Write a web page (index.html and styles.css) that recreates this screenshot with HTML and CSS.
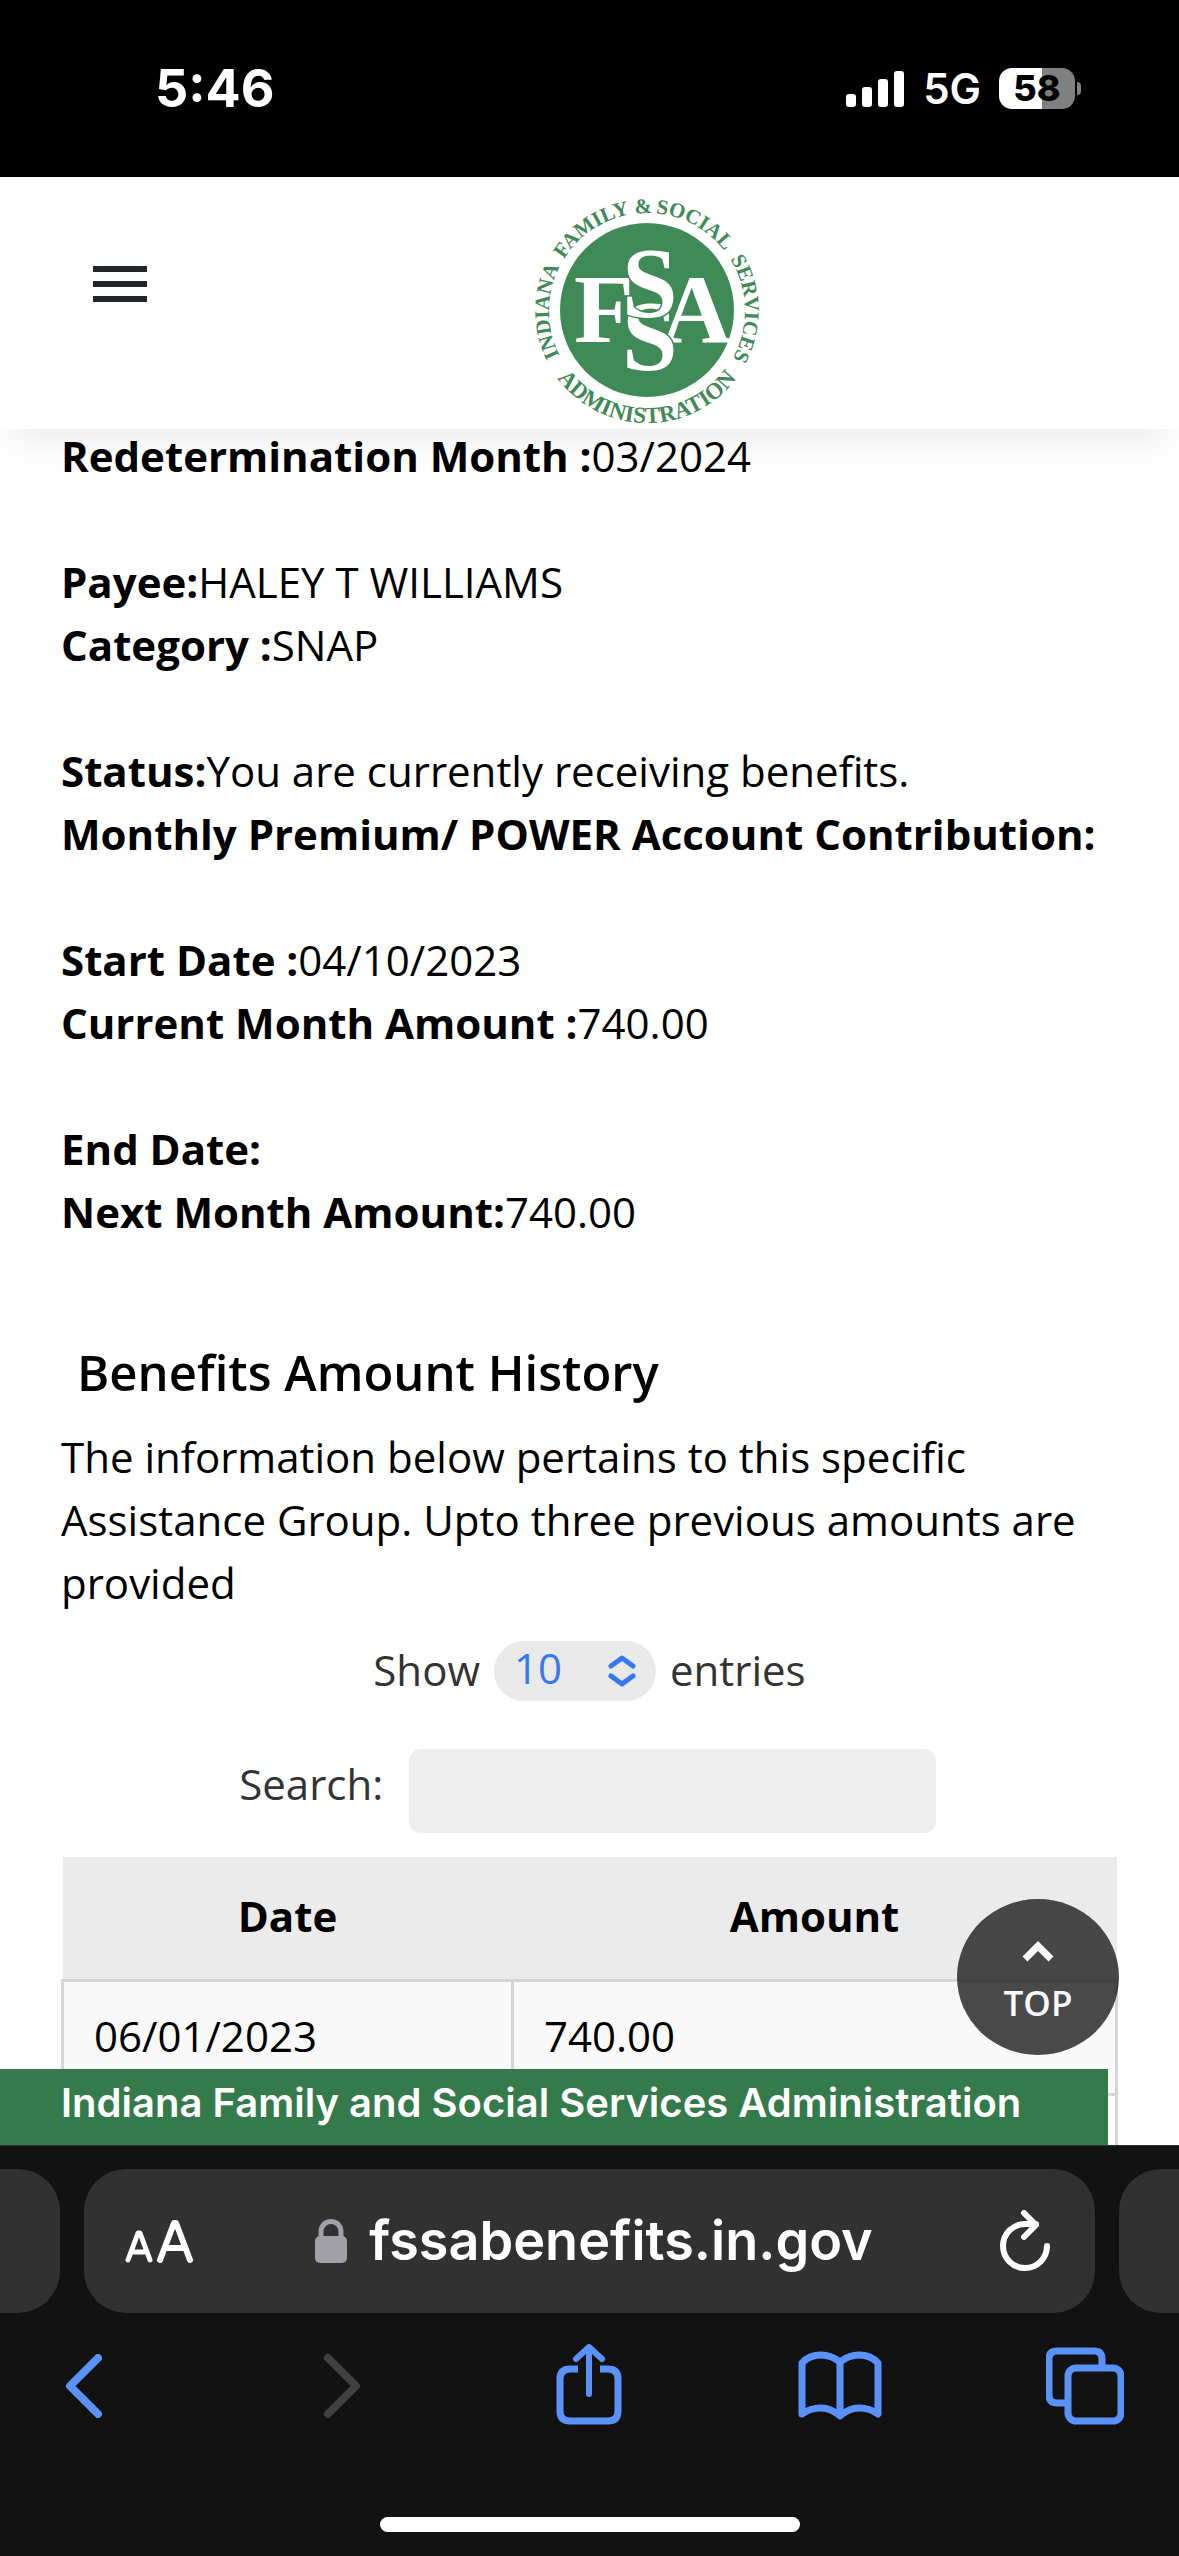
FILE: index.html
```html
<!DOCTYPE html>
<html lang="en">
<head>
<meta charset="utf-8">
<meta name="viewport" content="width=device-width, initial-scale=1">
<title>Indiana FSSA Benefits</title>
<link rel="stylesheet" href="styles.css">
</head>
<body>
<div class="phone">
  <div class="status">
    <span class="time">5:46</span>
    <div class="indicators">
      <svg class="signal" viewBox="0 0 60 38" aria-label="Signal">
        <rect x="1" y="24" width="10" height="13" rx="3"/><rect x="17" y="17" width="10" height="20" rx="3"/><rect x="33" y="9" width="10" height="28" rx="3"/><rect x="49" y="1" width="10" height="36" rx="3"/>
      </svg>
      <span class="network">5G</span>
      <div class="battery"><span class="battery-level">58</span><span class="battery-nub"></span></div>
    </div>
  </div>

  <header class="site-header">
    <button class="menu" type="button" aria-label="Menu"><span></span><span></span><span></span></button>
    <svg class="logo" viewBox="0 0 226 226" role="img" aria-label="Indiana Family and Social Services Administration">
      <defs>
        <path id="ring-upper" d="M113 211 A98 98 0 0 1 113 15 A98 98 0 0 1 113 211"/>
        <path id="ring-lower" d="M1 113 A112 112 0 0 0 225 113"/>
      </defs>
      <circle cx="113" cy="112" r="87"/>
      <g class="ring">
        <text><textPath href="#ring-upper" startOffset="25%">INDIANA</textPath></text>
        <text><textPath href="#ring-upper" startOffset="40.5%">FAMILY</textPath></text>
        <text><textPath href="#ring-upper" startOffset="49.4%">&amp;</textPath></text>
        <text><textPath href="#ring-upper" startOffset="58%">SOCIAL</textPath></text>
        <text><textPath href="#ring-upper" startOffset="74.6%">SERVICES</textPath></text>
        <text class="ring-base"><textPath href="#ring-lower" startOffset="50%">ADMINISTRATION</textPath></text>
      </g>
      <g class="monogram">
        <text x="40" y="144">F</text>
        <text x="127" y="144">A</text>
        <text x="88" y="171" class="letter-s">S</text>
        <text x="88" y="118" class="letter-s">S</text>
      </g>
    </svg>
  </header>

  <main class="content">
    <section class="details">
      <p><b>Redetermination Month :</b>03/2024</p>
      <p><b>Payee:</b>HALEY T WILLIAMS<br><b>Category :</b>SNAP</p>
      <p><b>Status:</b>You are currently receiving benefits.<br><b>Monthly Premium/ POWER Account Contribution:</b></p>
      <p><b>Start Date :</b>04/10/2023<br><b>Current Month Amount :</b>740.00</p>
      <p><b>End Date:</b><br><b>Next Month Amount:</b>740.00</p>
    </section>

    <h2>Benefits Amount History</h2>
    <p class="intro">The information below pertains to this specific Assistance Group. Upto three previous amounts are provided</p>

    <div class="length">
      <label for="entries">Show</label>
      <span class="select">
        <select id="entries"><option>10</option><option>25</option><option>50</option></select>
        <svg viewBox="0 0 28 32"><path d="M3 11 L14 3 L25 11 M3 21 L14 29 L25 21"/></svg>
      </span>
      <span>entries</span>
    </div>
    <div class="search">
      <label for="search">Search:</label>
      <input id="search" type="search">
    </div>

    <table>
      <thead><tr><th class="date">Date</th><th>Amount</th></tr></thead>
      <tbody>
        <tr><td>06/01/2023</td><td>740.00</td></tr>
        <tr><td></td><td></td></tr>
      </tbody>
    </table>

    <a class="top" href="#">
      <svg viewBox="0 0 32 21"><path d="M3 18 L16 5 L29 18"/></svg>
      <span>TOP</span>
    </a>
    <footer class="site-footer">Indiana Family and Social Services Administration</footer>
  </main>

  <div class="browser">
    <div class="tabs">
      <div class="tab"></div>
      <div class="tab address">
        <button class="text-size" type="button" aria-label="Text size">
          <svg viewBox="0 0 70 44"><path d="M3 41 L13 14 H15 L25 41 M7 33 H21" stroke-width="5"/><path d="M35 41 L49 4 H51 L65 41 M40 29 H60" stroke-width="6"/></svg>
        </button>
        <div class="site">
          <svg viewBox="0 0 32 44"><rect y="17" width="32" height="27" rx="5"/><path d="M6 18 V13 C6 -1 26 -1 26 13 V18"/></svg>
          <span>fssabenefits.in.gov</span>
        </div>
        <button class="reload" type="button" aria-label="Reload">
          <svg viewBox="0 0 52 62"><path d="M48 36 A22 22 0 1 1 26 14 H37 M25 3 L37 15 L25 27"/></svg>
        </button>
      </div>
      <div class="tab"></div>
    </div>
    <nav class="toolbar">
      <button type="button" aria-label="Back"><svg class="chevron" viewBox="0 0 56 64"><path d="M33 4 L5 32 L33 60"/></svg></button>
      <button type="button" aria-label="Forward" disabled><svg class="chevron" viewBox="0 0 56 64"><path d="M15 4 L43 32 L15 60"/></svg></button>
      <button type="button" aria-label="Share"><svg class="share" viewBox="0 0 66 84"><path d="M22 25 H14 Q4 25 4 35 V67 Q4 77 14 77 H52 Q62 77 62 67 V35 Q62 25 52 25 H44"/><path class="round" d="M33 50 V4 M20 15 L33 3 L46 15"/></svg></button>
      <button type="button" aria-label="Bookmarks"><svg class="book" viewBox="0 0 84 70"><path d="M42 65 V11 Q33 4 23 4 Q11 4 4 12 V63 Q12 57 23 57 Q33 57 42 65 Q51 57 61 57 Q72 57 80 63 V12 Q73 4 61 4 Q51 4 42 11"/></svg></button>
      <button type="button" aria-label="Tabs"><svg class="pages" viewBox="0 0 78 78"><rect x="22" y="21" width="53" height="53" rx="8"/><path d="M22 56 H11 Q3 56 3 48 V12 Q3 4 11 4 H48 Q56 4 56 12 V21"/></svg></button>
    </nav>
    <div class="home"></div>
  </div>
</div>
</body>
</html>
```

FILE: styles.css
```css
* { box-sizing: border-box; }

body {
  margin: 0;
  background: #fff;
  color: #000;
  font: 42px/63px "Open Sans", "Noto Sans", sans-serif;
}

button {
  padding: 0;
  border: 0;
  background: none;
  color: inherit;
  font: inherit;
}

svg { display: block; }

.phone {
  display: flex;
  flex-direction: column;
  height: 100vh;
  overflow: hidden;
}

/* Status bar */
.status {
  display: flex;
  flex: none;
  justify-content: space-between;
  align-items: center;
  height: 177px;
  padding: 0 104px 0 155px;
  background: #000;
  color: #fff;
  font-family: Inter, sans-serif;
}

.time { font-size: 52px; font-weight: 700; }

.indicators { display: flex; align-items: center; gap: 18px; }

.signal { width: 60px; height: 38px; fill: #fff; }

.network { font-size: 42px; font-weight: 600; }

.battery { position: relative; }

.battery-level {
  display: block;
  width: 76px;
  border-radius: 13px;
  background: linear-gradient(90deg, #fff 57%, #808080 57%);
  color: #000;
  font-size: 36px;
  font-weight: 800;
  line-height: 41px;
  text-align: center;
}

.battery-nub {
  position: absolute;
  top: 14px;
  right: -6px;
  width: 4px;
  height: 13px;
  border-radius: 0 4px 4px 0;
  background: #808080;
}

/* Site header */
.site-header {
  position: relative;
  z-index: 1;
  display: grid;
  flex: none;
  grid-template-columns: 1fr 226px 1fr;
  padding: 21px 0 5px 114px;
  background: #fff;
  box-shadow: 0 24px 36px -12px rgba(0, 0, 0, .08);
}

.menu {
  display: flex;
  flex-direction: column;
  gap: 9px;
  width: 54px;
  margin: 68px 0 0 -21px;
}

.menu span { width: 54px; height: 6px; background: #212529; }

.logo { width: 226px; height: 226px; overflow: visible; fill: #3f8a56; }

.ring, .monogram { font-family: "Liberation Serif", serif; font-weight: 700; }

.ring { font-size: 21px; text-anchor: middle; }

.ring-base { font-size: 23px; }

.monogram { fill: #fff; font-size: 98px; }

.letter-s {
  font-size: 100px;
  stroke: #3f8a56;
  stroke-width: 3px;
  paint-order: stroke;
}

/* Page content */
.content {
  position: relative;
  flex: 1;
  min-height: 0;
  margin-top: -5px;
  padding: 0 61px;
  overflow: hidden;
}

p { margin: 0; }

.details { display: grid; gap: 63px; }

h2 {
  margin: 95px 16px 18px;
  font-size: 49px;
  font-weight: 600;
  line-height: 69px;
}

.length, .search {
  display: flex;
  justify-content: center;
  color: #333;
}

.length { gap: 14px; margin-top: 24px; }

.select { position: relative; height: 60px; margin-top: 3px; }

.select select {
  display: block;
  width: 162px;
  height: 60px;
  padding: 0 20px 7px;
  border: 0;
  border-radius: 30px;
  appearance: none;
  background: #e9e9ea;
  color: #3478f6;
  font: inherit;
  line-height: 53px;
}

.select svg {
  position: absolute;
  top: 14px;
  right: 20px;
  width: 28px;
  height: 32px;
  fill: none;
  stroke: #3478f6;
  stroke-width: 5;
  stroke-linecap: round;
  stroke-linejoin: round;
}

.search { gap: 26px; margin-top: 48px; padding-right: 4px; }

.search label { padding-top: 3px; }

.search input {
  width: 50%;
  height: 84px;
  border: 0;
  border-radius: 12px;
  background: #eee;
  font: inherit;
}

table {
  width: 100%;
  margin-top: 24px;
  border-collapse: collapse;
}

th {
  height: 123px;
  padding: 0 0 4px;
  background: #ebebeb;
  font-weight: 700;
}

.date { width: 450px; }

td {
  height: 114px;
  padding: 0 30px 4px;
  border: 3px solid #d5d5d5;
}

tbody tr:first-child { background: #f9f9f9; }

.top {
  position: absolute;
  right: 60px;
  bottom: 90px;
  display: flex;
  flex-direction: column;
  align-items: center;
  gap: 18px;
  width: 162px;
  height: 156px;
  padding-top: 42px;
  border-radius: 50%;
  background: rgba(29, 29, 29, .8);
  color: #f9f9f9;
  font: 600 35px/45px "Open Sans", sans-serif;
  text-decoration: none;
}

.top svg {
  width: 32px;
  height: 21px;
  fill: none;
  stroke: #f9f9f9;
  stroke-width: 7;
}

.site-footer {
  position: absolute;
  right: 71px;
  bottom: 0;
  left: 0;
  height: 76px;
  padding-left: 61px;
  background: #357a4a;
  color: #fff;
  font: 600 40px/68px Inter, sans-serif;
  white-space: nowrap;
}

/* Browser controls */
.browser {
  flex: none;
  padding: 23px 0 24px;
  border-top: 1px solid #333;
  background: #121212;
  color: #fff;
}

.tabs {
  display: grid;
  grid-template-columns: 60px 1fr 60px;
  gap: 24px;
}

.tab { height: 144px; border-radius: 42px; background: #313131; }

.tab:first-child { border-radius: 0 42px 42px 0; }

.tab:last-child { border-radius: 42px 0 0 42px; }

.address {
  display: flex;
  justify-content: space-between;
  align-items: center;
  padding: 0 44px 0 41px;
}

.text-size svg {
  width: 70px;
  height: 44px;
  fill: none;
  stroke: #fff;
  stroke-linecap: round;
  stroke-linejoin: round;
}

.site {
  display: flex;
  align-items: center;
  gap: 22px;
  padding-right: 6px;
  font: 600 54px/72px Inter, sans-serif;
}

.site svg { width: 32px; height: 44px; fill: #a1a0a8; }

.site path { fill: none; stroke: #a1a0a8; stroke-width: 5; }

.reload svg {
  width: 52px;
  height: 62px;
  fill: none;
  stroke: #fff;
  stroke-width: 6;
  stroke-linecap: round;
  stroke-linejoin: round;
}

.toolbar {
  display: flex;
  justify-content: space-between;
  align-items: center;
  height: 84px;
  margin-top: 31px;
  padding: 0 57px 0 55px;
  color: #5b92f9;
}

.toolbar button { display: grid; justify-items: center; align-items: center; width: 76px; }

.toolbar button:disabled { color: #404040; }

.toolbar svg {
  fill: none;
  stroke: currentColor;
  stroke-width: 7;
  stroke-linejoin: round;
}

.toolbar .chevron { width: 56px; height: 64px; stroke-width: 8; stroke-linecap: round; }

.toolbar .share { width: 66px; height: 84px; }

.toolbar .round { stroke-width: 6; stroke-linecap: round; }

.toolbar .book { width: 84px; height: 70px; }

.toolbar .pages { width: 78px; height: 78px; }

.home {
  width: 420px;
  height: 15px;
  margin: 89px auto 0;
  border-radius: 8px;
  background: #fff;
}
```
